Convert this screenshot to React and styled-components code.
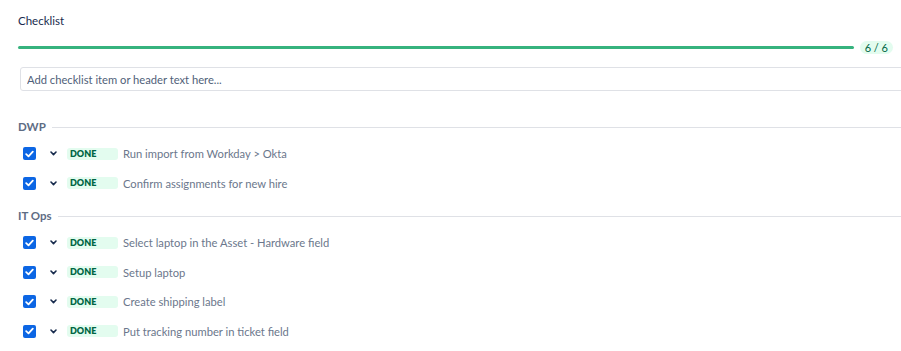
import React from 'react';
import styled, { createGlobalStyle } from 'styled-components';

const Global = createGlobalStyle`
  body {
    margin: 0;
    background: #fff;
    font-family: "Segoe UI", Lato, "Noto Sans", sans-serif;
    overflow: hidden;
  }
`;

const Page = styled.div`
  width: 901px;
  padding: 12px 0 0 18px;
  box-sizing: border-box;
`;

const Title = styled.div`
  font-size: 11.5px;
  color: #172b4d;
  line-height: 17px;
`;

const ProgressRow = styled.div`
  display: flex;
  align-items: center;
  gap: 6px;
  margin-top: 12px;
  padding-right: 8px;
`;

const Track = styled.div`
  flex: 1;
  height: 3px;
  background: #36b37e;
  border-radius: 2px;
`;

const Count = styled.span`
  background: #e3fcef;
  color: #006644;
  font-size: 11px;
  line-height: 13px;
  padding: 0 5px;
  border-radius: 7px;
`;

const Input = styled.input`
  display: block;
  margin: 13px 0 0 2px;
  width: 900px;
  height: 24px;
  box-sizing: border-box;
  border: 1px solid #dfe1e6;
  border-radius: 3px;
  padding: 0 6px;
  font: inherit;
  font-size: 11.2px;
  color: #172b4d;
  outline: none;
  &::placeholder { color: #505f79; }
`;

const Section = styled.div`
  margin-top: ${p => p.$first ? 28 : 10}px;
`;

const Heading = styled.div`
  display: flex;
  align-items: center;
  gap: 6px;
  font-size: 11.5px;
  font-weight: 700;
  color: #5e6c84;
  line-height: 16px;
  &::after {
    content: "";
    flex: 1;
    height: 1px;
    background: #dfe1e6;
  }
`;

const Row = styled.div`
  display: flex;
  align-items: center;
  height: 29.5px;
  margin-top: ${p => p.$first ? 4 : 0}px;
`;

const Box = styled.span`
  width: 13px;
  height: 13px;
  margin-left: 5px;
  border-radius: 2px;
  background: #0c66e4;
  display: flex;
  align-items: center;
  justify-content: center;
`;

const Chevron = styled.svg`
  margin-left: 14px;
  width: 7px;
  height: 5px;
`;

const Lozenge = styled.span`
  margin-left: 10px;
  width: 51px;
  height: 12px;
  box-sizing: border-box;
  padding-left: 3px;
  background: #e3fcef;
  color: #006644;
  border-radius: 3px;
  font-size: 9px;
  font-weight: 800;
  line-height: 12px;
`;

const Label = styled.span`
  margin-left: 5px;
  font-size: 11.2px;
  color: #6b778c;
`;

const sections = [
  { name: 'DWP', items: ['Run import from Workday > Okta', 'Confirm assignments for new hire'] },
  { name: 'IT Ops', items: ['Select laptop in the Asset - Hardware field', 'Setup laptop', 'Create shipping label', 'Put tracking number in ticket field'] },
];

function Item({ text, first }) {
  return (
    <Row $first={first}>
      <Box>
        <svg width="9" height="8" viewBox="0 0 9 8">
          <path d="M1.2 4.2 L3.5 6.3 L7.8 1.6" fill="none" stroke="#fff" strokeWidth="1.8" strokeLinecap="round" strokeLinejoin="round" />
        </svg>
      </Box>
      <Chevron viewBox="0 0 7 5">
        <path d="M1 1 L3.5 3.6 L6 1" fill="none" stroke="#172b4d" strokeWidth="1.6" strokeLinecap="round" strokeLinejoin="round" />
      </Chevron>
      <Lozenge>DONE</Lozenge>
      <Label>{text}</Label>
    </Row>
  );
}

export default function App() {
  return (
    <Page>
      <Global />
      <Title>Checklist</Title>
      <ProgressRow>
        <Track />
        <Count>6 / 6</Count>
      </ProgressRow>
      <Input placeholder="Add checklist item or header text here..." />
      {sections.map((s, i) => (
        <Section key={s.name} $first={i === 0}>
          <Heading>{s.name}</Heading>
          {s.items.map((t, j) => <Item key={t} text={t} first={j === 0} />)}
        </Section>
      ))}
    </Page>
  );
}
